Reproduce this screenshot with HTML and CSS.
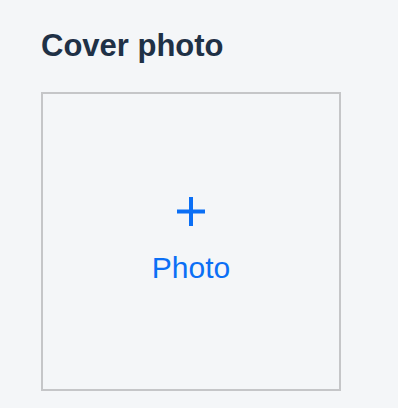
FILE: index.html
```html
<!DOCTYPE html>
<html lang="en">
    <head>
        <meta charset="UTF-8" />
        <meta name="viewport" content="width=device-width, initial-scale=1.0" />
        <title>Cover photo</title>
        <link rel="stylesheet" href="styles.css">
    </head>
    <body>
        <div class="container">
            <h2 class="title">Cover photo</h2>
            <div class="upload">
                <svg class="plus" viewBox="0 0 28 29" width="28" height="29">
                    <line x1="14" y1="0" x2="14" y2="29" stroke="#0b6ff5" stroke-width="4" />
                    <line x1="0" y1="14.5" x2="28" y2="14.5" stroke="#0b6ff5" stroke-width="4" />
                </svg>
                <div class="upload-label">Photo</div>
            </div>
        </div>
    </body>
</html>
```

FILE: styles.css
```css
body {
    margin: 0;
    background-color: #f4f6f8;
    font-family: "Liberation Sans", Arial, sans-serif;
}

.container {
    padding: 27px 0 0 41px;
}

.title {
    margin: 0 0 28px 0;
    font-size: 31px;
    line-height: 37px;
    font-weight: bold;
    color: #1f3146;
}

.upload {
    box-sizing: border-box;
    width: 300px;
    height: 299px;
    border: 2px solid #c5c6c8;
    display: flex;
    flex-direction: column;
    align-items: center;
    justify-content: center;
}

.plus {
    display: block;
    margin-bottom: 24px;
}

.upload-label {
    font-size: 30px;
    line-height: 36px;
    color: #0b6ff5;
}
```
